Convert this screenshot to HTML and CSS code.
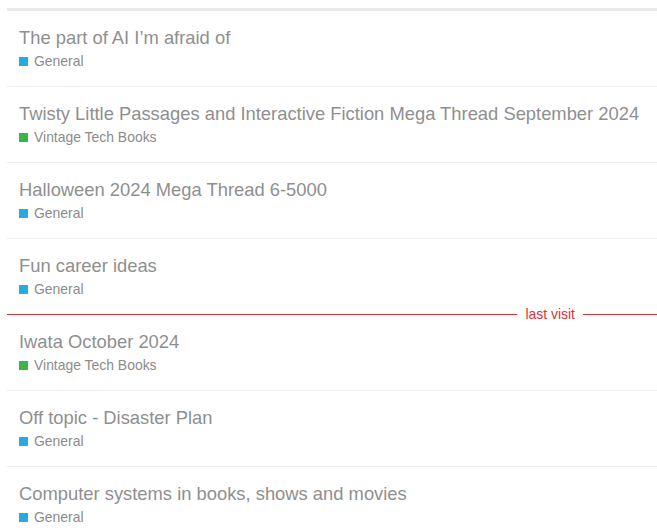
FILE: index.html
```html
<!DOCTYPE html>
<html>
<head>
<meta charset="utf-8">
<link rel="stylesheet" href="styles.css">
</head>
<body>
<div class="topic-list">
  <div class="topic">
    <div class="title">The part of AI I’m afraid of</div>
    <div class="category"><span class="swatch blue"></span>General</div>
  </div>
  <div class="topic">
    <div class="title">Twisty Little Passages and Interactive Fiction Mega Thread September 2024</div>
    <div class="category"><span class="swatch green"></span>Vintage Tech Books</div>
  </div>
  <div class="topic">
    <div class="title">Halloween 2024 Mega Thread 6-5000</div>
    <div class="category"><span class="swatch blue"></span>General</div>
  </div>
  <div class="topic no-border">
    <div class="title">Fun career ideas</div>
    <div class="category"><span class="swatch blue"></span>General</div>
  </div>
  <div class="last-visit">
    <span class="line"></span>
    <span class="label">last visit</span>
    <span class="line short"></span>
  </div>
  <div class="topic">
    <div class="title">Iwata October 2024</div>
    <div class="category"><span class="swatch green"></span>Vintage Tech Books</div>
  </div>
  <div class="topic">
    <div class="title">Off topic - Disaster Plan</div>
    <div class="category"><span class="swatch blue"></span>General</div>
  </div>
  <div class="topic">
    <div class="title">Computer systems in books, shows and movies</div>
    <div class="category"><span class="swatch blue"></span>General</div>
  </div>
</div>
</body>
</html>
```

FILE: styles.css
```css
html, body {
  margin: 0;
  padding: 0;
  background: #ffffff;
}

body {
  font-family: "Liberation Sans", Arial, sans-serif;
  overflow: hidden;
}

.topic-list {
  margin: 8px 0 0 7px;
  border-top: 3px solid #e9e9e9;
}

.topic {
  padding: 16px 12px 0 12px;
  border-bottom: 1px solid #ededed;
  height: 59px;
}

.topic.no-border {
  border-bottom: none;
  height: 60px;
}

.title {
  font-size: 18.38px;
  line-height: 22px;
  color: #8f8f8f;
  white-space: nowrap;
}

.category {
  margin-top: 3px;
  font-size: 13.93px;
  line-height: 18px;
  color: #8c8c8c;
  display: flex;
  align-items: center;
  white-space: nowrap;
}

.swatch {
  width: 9px;
  height: 9px;
  margin-right: 6px;
  margin-top: 1px;
  flex: none;
}

.swatch.blue { background: #25aae2; }
.swatch.green { background: #3ab54a; }

.last-visit {
  height: 1px;
  margin: -1px 0 0 0;
  display: flex;
  align-items: flex-start;
}

.last-visit .line {
  flex: 1;
  height: 0;
  border-top: 1px solid #d6323c;
}

.last-visit .line.short {
  flex: none;
  width: 74px;
}

.last-visit .label {
  font-size: 13.93px;
  line-height: 16px;
  height: 16px;
  margin-top: -8px;
  color: #d6323c;
  padding: 0 8px;
}
```
